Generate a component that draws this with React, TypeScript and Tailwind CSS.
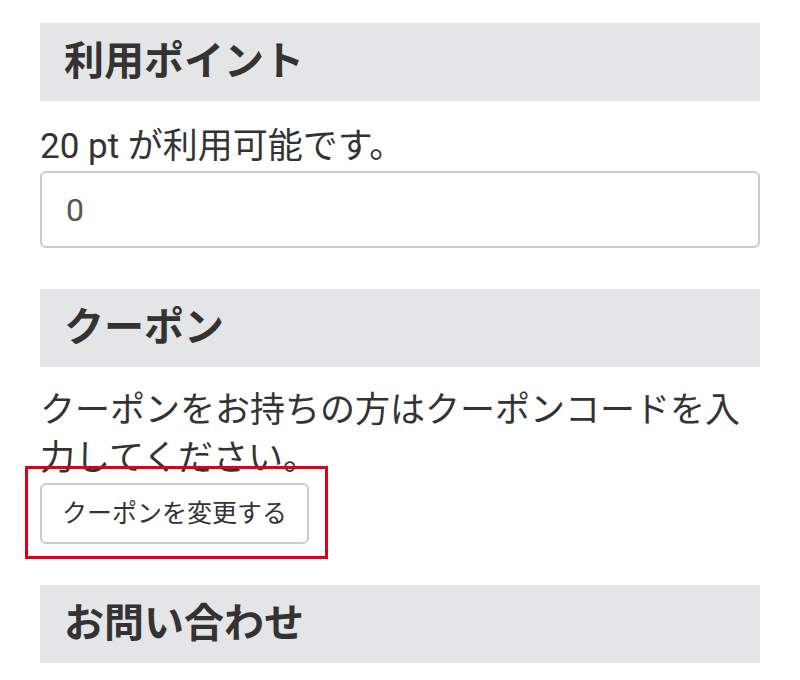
import React from 'react';

const font = { fontFamily: 'Roboto, "Noto Sans CJK JP", sans-serif' };

function SectionHeader({ title }: { title: string }) {
  return (
    <h2 className="flex h-[78px] items-center bg-[#e4e5e7] px-6 text-[40px] font-bold text-[#333]">
      {title}
    </h2>
  );
}

export default function App() {
  return (
    <div className="min-h-[680px] bg-white px-10 pt-[23px] text-[#333]" style={font}>
      <SectionHeader title="利用ポイント" />
      <p className="mt-[22px] text-[35px] leading-[48px]">20 pt が利用可能です。</p>
      <input
        type="text"
        defaultValue="0"
        className="block h-[77px] w-full rounded-md border-2 border-[#cccccc] px-6 text-[32px] text-[#555] outline-none"
      />

      <div className="mt-[41px]">
        <SectionHeader title="クーポン" />
      </div>
      <p className="mt-5 text-[35px] leading-[48px]">
        クーポンをお持ちの方はクーポンコードを入力してください。
      </p>
      <div className="relative inline-block">
        <button className="h-[61px] rounded-md border-2 border-[#cccccc] bg-white px-[20px] text-[25px] text-[#333]">
          クーポンを変更する
        </button>
        {/* annotation frame */}
        <div className="pointer-events-none absolute -bottom-[15px] -left-[15px] -right-[19px] -top-[17px] border-[3px] border-[#e0001b]" />
      </div>

      <div className="mt-[41px]">
        <SectionHeader title="お問い合わせ" />
      </div>
    </div>
  );
}
